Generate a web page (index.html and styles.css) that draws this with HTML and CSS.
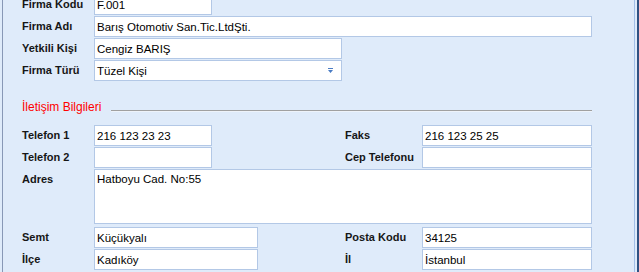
FILE: index.html
```html
<!DOCTYPE html>
<html lang="tr">
<head>
    <meta charset="UTF-8">
    <title>Firma Kartı</title>
    <link rel="stylesheet" href="styles.css">
</head>
<body>

<div class="frame">
    <div class="form">
        <div class="row">
            <label class="lbl">Firma Kodu</label>
            <input class="field w-short" value="F.001">
        </div>
        <div class="row">
            <label class="lbl">Firma Adı</label>
            <input class="field w-full" value="Barış Otomotiv San.Tic.LtdŞti.">
        </div>
        <div class="row">
            <label class="lbl">Yetkili Kişi</label>
            <input class="field w-mid" value="Cengiz BARIŞ">
        </div>
        <div class="row">
            <label class="lbl">Firma Türü</label>
            <div class="field w-mid combo">
                <span>Tüzel Kişi</span>
                <svg class="arrow" width="7" height="5" viewBox="0 0 7 5"><path d="M1 0h5v1H1z M1 2h5l-2.5 3z" fill="#4a7cc4"/></svg>
            </div>
        </div>
    </div>

    <!-- İletişim bölümü -->
    <div class="section-title">
        <span>İletişim Bilgileri</span>
        <span class="rule"></span>
    </div>

    <div class="contact">
        <label class="lbl">Telefon 1</label>
        <div><input class="field w-short" value="216 123 23 23"></div>
        <label class="lbl">Faks</label>
        <input class="field" value="216 123 25 25">

        <label class="lbl">Telefon 2</label>
        <div><input class="field w-short" value=""></div>
        <label class="lbl">Cep Telefonu</label>
        <input class="field" value="">

        <label class="lbl">Adres</label>
        <textarea class="field adres">Hatboyu Cad. No:55</textarea>

        <label class="lbl">Semt</label>
        <div><input class="field w-semt" value="Küçükyalı"></div>
        <label class="lbl">Posta Kodu</label>
        <input class="field" value="34125">

        <label class="lbl">İlçe</label>
        <div><input class="field w-semt" value="Kadıköy"></div>
        <label class="lbl">İl</label>
        <input class="field" value="İstanbul">
    </div>
</div>
<div class="edge"></div>

</body>
</html>
```

FILE: styles.css
```css
body {
    margin: 0;
    height: 272px;
    overflow: hidden;
    display: flex;
    background-color: #dfebfa;
    font-family: "Liberation Sans", Arial, sans-serif;
}
.frame {
    margin-left: 2px;
    width: 631px;
    border-left: 1px solid #8898b6;
    border-right: 1px solid #a2bfe8;
    padding-left: 19px;
    box-sizing: content-box;
}
.edge {
    margin-left: 2px;
    width: 2px;
    background-color: #2f5283;
}
.form {
    margin-top: -6px;
    display: flex;
    flex-direction: column;
    gap: 1px;
}
.row {
    display: flex;
    height: 21px;
}
.lbl {
    width: 72px;
    flex: none;
    line-height: 21px;
    font-size: 11px;
    font-weight: bold;
    color: #161616;
    white-space: nowrap;
}
.field {
    box-sizing: border-box;
    height: 21px;
    margin: 0;
    padding: 0 2px;
    border: 1px solid #b3c8e6;
    background-color: white;
    font-family: "Liberation Sans", Arial, sans-serif;
    font-size: 11.5px;
    color: #000;
    outline: none;
}
.w-short { width: 118px; }
.w-semt { width: 164px; }
.w-mid { width: 248px; }
.w-full { width: 498px; }
.combo {
    display: flex;
    align-items: center;
    justify-content: space-between;
    padding-right: 7px;
}
.section-title {
    display: flex;
    align-items: flex-start;
    margin: 19px 42px 11px 0;
    height: 14px;
    line-height: 14px;
    font-size: 12px;
    color: #ff0000;
}
.rule {
    flex: 1;
    margin: 10px 0 0 10px;
    height: 1px;
    background-color: #a0a0a0;
    box-shadow: 0 1px 0 #eef3fa;
}
.contact {
    display: grid;
    grid-template-columns: 72px 251px 77px 170px;
    grid-template-rows: 21px 21px 57px 21px 21px;
    row-gap: 1px;
}
.contact .field {
    display: block;
}
.adres {
    grid-column: 2 / 5;
    height: 55px;
    padding-top: 2px;
    line-height: 14px;
    resize: none;
    overflow: hidden;
}
```
